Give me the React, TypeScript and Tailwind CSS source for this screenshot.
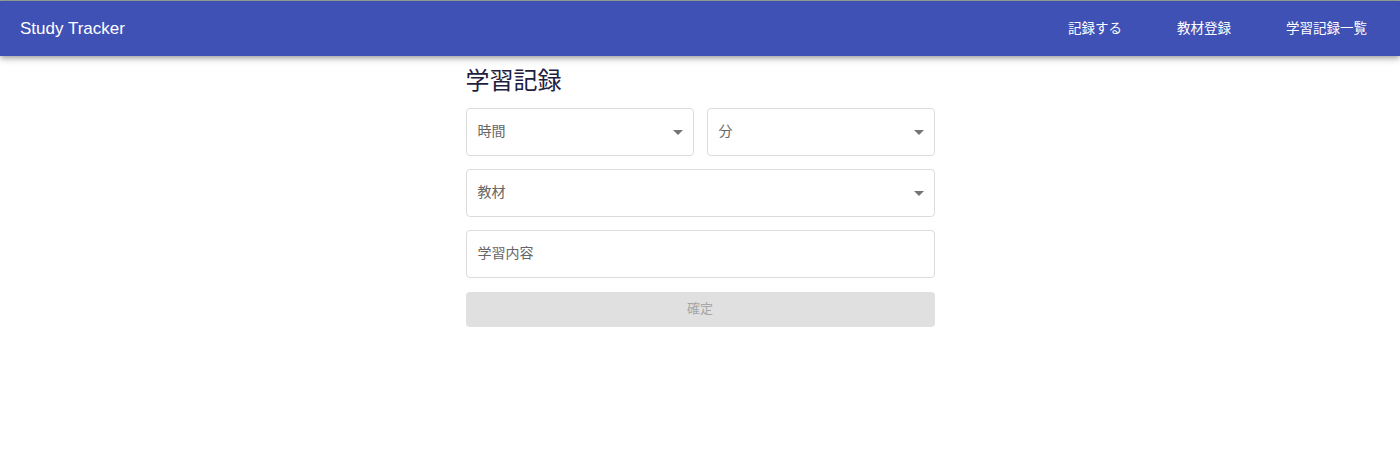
import React from "react";

const jp = '"Noto Sans CJK JP", "Noto Sans", sans-serif';

function Arrow() {
  return (
    <svg width="24" height="24" viewBox="0 0 24 24" className="shrink-0">
      <path d="M7 10l5 5 5-5z" fill="#757575" />
    </svg>
  );
}

function SelectField({ label }: { label: string }) {
  return (
    <div className="flex h-[48px] flex-1 items-center justify-between rounded-[4px] border border-[#dcdcdc] pl-[11px] pr-[3px]">
      <span className="pb-[4px] text-[14px] text-[#666666]" style={{ fontFamily: jp }}>
        {label}
      </span>
      <Arrow />
    </div>
  );
}

export default function App() {
  return (
    <div className="min-h-[464px] bg-white">
      <div className="h-px bg-[#93a595]" />
      <header className="relative z-10 flex h-[55px] items-center justify-between bg-[#3f51b5] pl-[20px] pr-[33px] shadow-[0_2px_4px_-1px_rgba(0,0,0,0.2),0_4px_5px_0_rgba(0,0,0,0.14),0_1px_10px_0_rgba(0,0,0,0.12)]">
        <div
          className="text-[17px] text-white"
          style={{ fontFamily: '"Liberation Sans", Arial, sans-serif' }}
        >
          Study Tracker
        </div>
        <nav className="flex items-center gap-[55px] pb-[2px] text-[13.5px] text-white" style={{ fontFamily: jp }}>
          <span>記録する</span>
          <span>教材登録</span>
          <span>学習記録一覧</span>
        </nav>
      </header>
      <main className="mx-auto flex w-[469px] flex-col pt-[6px]" style={{ fontFamily: jp }}>
        <h1 className="mb-[12px] text-[24px] leading-[34px] text-[#1e2040]">学習記録</h1>
        <div className="flex gap-[13px]">
          <SelectField label="時間" />
          <SelectField label="分" />
        </div>
        <div className="mt-[13px] flex">
          <SelectField label="教材" />
        </div>
        <div className="mt-[13px] flex h-[48px] items-center rounded-[4px] border border-[#dcdcdc] pl-[11px]">
          <span className="pb-[4px] text-[14px] text-[#666666]">学習内容</span>
        </div>
        <button
          disabled
          className="mt-[14px] flex h-[35px] items-center justify-center rounded-[4px] bg-[#e0e0e0] pb-[3px] text-[13px] text-[#a6a6a6]"
        >
          確定
        </button>
      </main>
    </div>
  );
}
